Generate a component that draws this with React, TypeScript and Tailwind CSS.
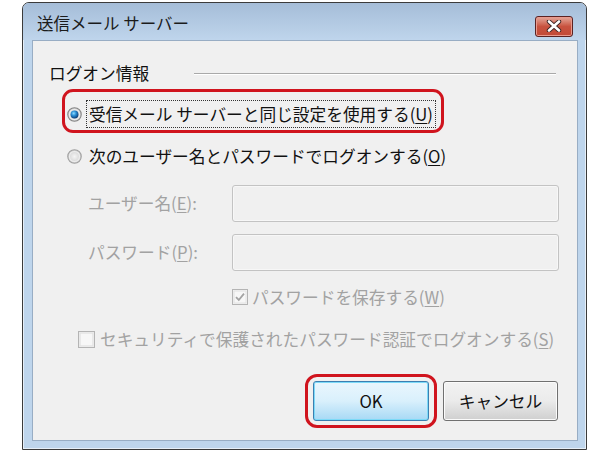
import React from "react";

const font = { fontFamily: '"Noto Sans CJK JP", "Noto Sans", sans-serif' };

function Radio({ checked }: { checked: boolean }) {
  return (
    <svg width="15" height="15" viewBox="0 0 14 14" className="shrink-0">
      <defs>
        <radialGradient id="rdot" cx="0.4" cy="0.35" r="0.65">
          <stop offset="0" stopColor="#8fdcff" />
          <stop offset="0.45" stopColor="#2b8fd6" />
          <stop offset="1" stopColor="#0b3d78" />
        </radialGradient>
        <radialGradient id="rin" cx="0.5" cy="0.5" r="0.5">
          <stop offset="0" stopColor="#f4f4f4" />
          <stop offset="1" stopColor="#cfcfcf" />
        </radialGradient>
      </defs>
      <circle cx="7" cy="7" r="6.3" fill="url(#rin)" stroke={checked ? "#858585" : "#a0a0a0"} strokeWidth="1" />
      <circle cx="7" cy="7" r="4.7" fill="none" stroke="#ededed" strokeWidth="1" />
      {checked && <circle cx="7" cy="7" r="3.7" fill="url(#rdot)" />}
    </svg>
  );
}

function Check({ checked, size }: { checked: boolean; size: number }) {
  return (
    <svg width={size} height={size} viewBox="0 0 16 16" className="shrink-0">
      <rect x="0.5" y="0.5" width="15" height="15" fill="#f4f4f4" stroke="#b4b4b4" />
      <rect x="2" y="2" width="12" height="12" fill="#f7f7f7" stroke="#e2e2e2" strokeWidth="1" />
      {checked && (
        <path d="M4 8.2 L6.8 11 L12 4.6" fill="none" stroke="#a3a3a3" strokeWidth="1.8" />
      )}
    </svg>
  );
}

function U({ c }: { c: string }) {
  return <span className="underline underline-offset-2">{c}</span>;
}

export default function App() {
  return (
    <div className="w-[600px] h-[452px] bg-white pt-[2px] pl-[22px]" style={font}>
      <div className="w-[565px] h-[448px] rounded-t-[7px] border border-[#3b3b3b] bg-[#bed5ec] flex flex-col shadow-[inset_0_0_0_1px_#e6eff8]">
        {/* title bar */}
        <div className="h-[37px] shrink-0 rounded-t-[6px] bg-gradient-to-b from-[#a5bdd8] to-[#bfd5ec] flex items-center justify-between pl-[14px] pr-[13px]">
          <span className="text-[16.5px] text-[#1b1b1b] leading-none mt-[3px]">送信メール サーバー</span>
          <div className="w-[38px] h-[21px] mt-[9px] rounded-[3px] border border-[#5b2323] bg-gradient-to-b from-[#e3a89b] via-[#c8523f] to-[#c24a37] flex items-center justify-center shadow-[inset_0_0_0_1px_#e99a8e]">
            <svg width="16" height="12" viewBox="0 0 16 12">
              <path d="M3 1.5 L13 10.5 M13 1.5 L3 10.5" stroke="#3b2424" strokeWidth="4.4" strokeLinecap="round" />
              <path d="M3 1.5 L13 10.5 M13 1.5 L3 10.5" stroke="#ffffff" strokeWidth="2.6" strokeLinecap="round" />
            </svg>
          </div>
        </div>
        {/* content */}
        <div className="ml-[9px] mr-[8px] h-[401px] border border-[#98adc4] bg-[#f0f0f0] flex flex-col text-[16.7px] text-[#111]">
          {/* group header */}
          <div className="mt-[22px] h-[20px] flex items-center">
            <span className="ml-[16px] leading-none">ログオン情報</span>
            <div className="ml-auto mr-[21px] w-[362px] h-px bg-[#a9a9a9] shadow-[0_1px_0_#ffffff]" />
          </div>
          {/* radio 1 */}
          <div className="relative mt-[17px] h-[28px] flex items-center">
            <div className="absolute left-[29px] top-[-11px] w-[382px] h-[44px] rounded-[11px] border-[3px] border-[#d0141e]" />
            <div className="ml-[34px]">
              <Radio checked={true} />
            </div>
            <span className="ml-[4px] px-[2px] h-[28px] flex items-center border border-dotted border-[#333] leading-none whitespace-nowrap">
              受信メール サーバーと同じ設定を使用する(<U c="U" />)
            </span>
          </div>
          {/* radio 2 */}
          <div className="mt-[14px] h-[28px] flex items-center">
            <div className="ml-[34px]">
              <Radio checked={false} />
            </div>
            <span className="ml-[7px] leading-none whitespace-nowrap">
              次のユーザー名とパスワードでログオンする(<U c="O" />)
            </span>
          </div>
          {/* user name */}
          <div className="mt-[15px] h-[37px] flex items-center">
            <span className="ml-[55px] w-[144px] text-[#a2a2a2] leading-none">
              ユーザー名(<U c="E" />):
            </span>
            <div className="w-[327px] h-[37px] rounded-[3px] border border-[#c3c3c3] bg-[#f0f0f0] shadow-[inset_0_0_0_1px_#f7f7f7]" />
          </div>
          {/* password */}
          <div className="mt-[12px] h-[37px] flex items-center">
            <span className="ml-[55px] w-[144px] text-[#a2a2a2] leading-none">
              パスワード(<U c="P" />):
            </span>
            <div className="w-[327px] h-[37px] rounded-[3px] border border-[#c3c3c3] bg-[#f0f0f0] shadow-[inset_0_0_0_1px_#f7f7f7]" />
          </div>
          {/* save password */}
          <div className="mt-[16px] h-[20px] flex items-center">
            <div className="ml-[199px]">
              <Check checked={true} size={16} />
            </div>
            <span className="ml-[4px] text-[#a2a2a2] leading-none whitespace-nowrap">
              パスワードを保存する(<U c="W" />)
            </span>
          </div>
          {/* security */}
          <div className="mt-[22px] h-[20px] flex items-center">
            <div className="ml-[45px]">
              <Check checked={false} size={17} />
            </div>
            <span className="ml-[5px] text-[#a2a2a2] leading-none whitespace-nowrap">
              セキュリティで保護されたパスワード認証でログオンする(<U c="S" />)
            </span>
          </div>
          {/* buttons */}
          <div className="mt-[32px] h-[40px] flex items-center">
            <div className="relative ml-[280px]">
              <div className="absolute left-[-8px] top-[-7px] w-[132px] h-[54px] rounded-[12px] border-[3px] border-[#d0141e]" />
              <div className="w-[116px] h-[40px] rounded-[3px] border border-[#3c7fb1] bg-gradient-to-b from-[#eaf6fd] via-[#d9f0fc] to-[#a7d9f5] flex items-center justify-center shadow-[inset_0_0_0_1px_#7ddaf8]">
                <span className="leading-none">OK</span>
              </div>
            </div>
            <div className="ml-[14px] w-[115px] h-[40px] rounded-[3px] border border-[#707070] bg-gradient-to-b from-[#f2f2f2] via-[#ebebeb] to-[#cfcfcf] flex items-center justify-center shadow-[inset_0_0_0_1px_#fbfbfb]">
              <span className="leading-none">キャンセル</span>
            </div>
          </div>
        </div>
      </div>
    </div>
  );
}
